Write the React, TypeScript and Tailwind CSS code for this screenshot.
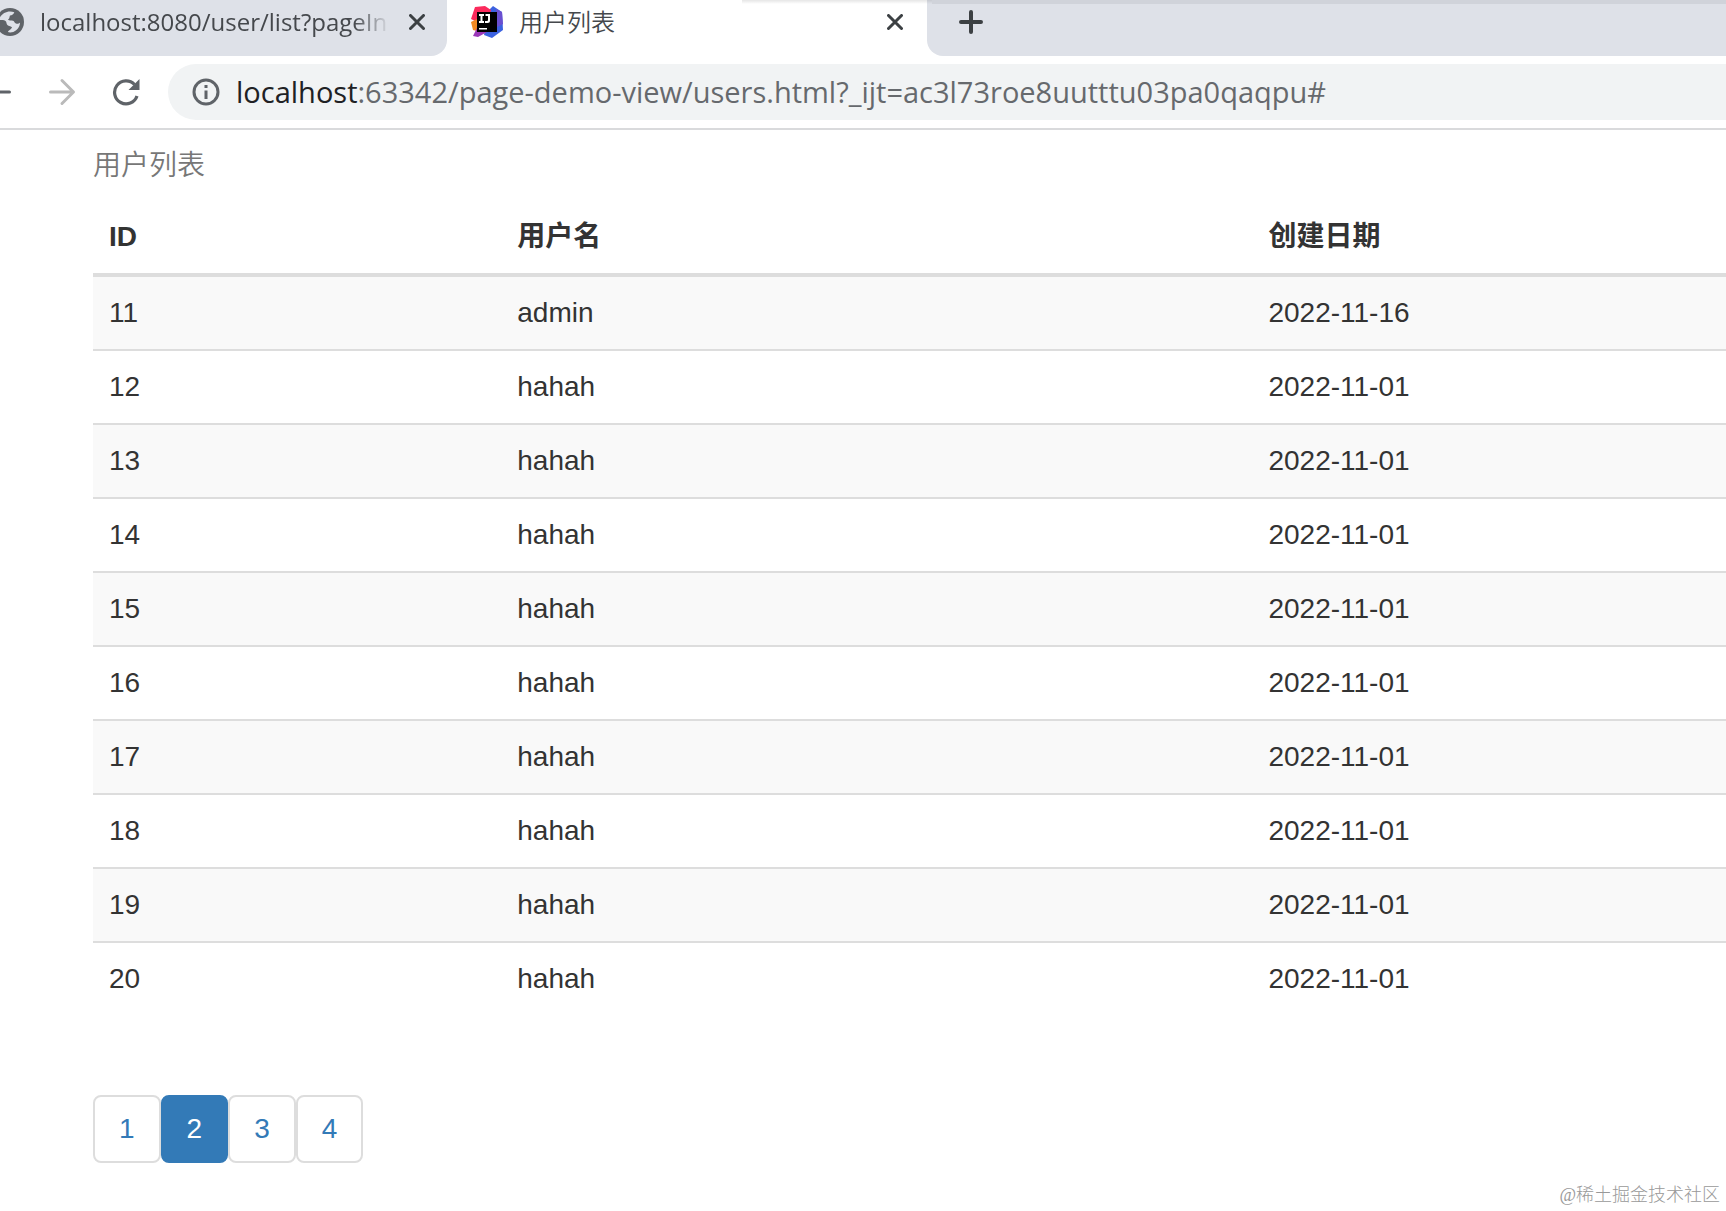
const users = [
  { id: 11, name: "admin", date: "2022-11-16" },
  { id: 12, name: "hahah", date: "2022-11-01" },
  { id: 13, name: "hahah", date: "2022-11-01" },
  { id: 14, name: "hahah", date: "2022-11-01" },
  { id: 15, name: "hahah", date: "2022-11-01" },
  { id: 16, name: "hahah", date: "2022-11-01" },
  { id: 17, name: "hahah", date: "2022-11-01" },
  { id: 18, name: "hahah", date: "2022-11-01" },
  { id: 19, name: "hahah", date: "2022-11-01" },
  { id: 20, name: "hahah", date: "2022-11-01" },
]

const pages = [1, 2, 3, 4]
const current = 2

const CloseIcon = () => (
  <svg className="w-4 h-4" viewBox="0 0 16 16" fill="none" stroke="currentColor" strokeWidth="3" strokeLinecap="round">
    <path d="M1.500 1.500l13 13M14.500 1.500l-13 13" />
  </svg>
)

const GlobeIcon = () => (
  <svg className="size-7 shrink-0" viewBox="0 0 28 28">
    <circle cx="14" cy="14" r="14" fill="#5f6368" />
    <path d="M3 12C4 7 9 3.500 14 3.500c1.500 0 3 .3 4.300.8-.5 2-2.300 3-4.300 3.200-.8 2-.3 3-2 4 1 1.300 3.500.8 5 1.200 1.600.5 1.400 2.300 3 2.900 1.500.6 3-.2 4-.8-.3 4.500-3 7.700-6.700 9.200-2 .6-4.300.6-5.300 0 .4-2.200 3.600-2.600 4-4.800-1.500-1.400-4-1-5-2.700-.7-1.200-.3-2.500-1.500-3.500-2-1.300-4.500-.8-6.500-1z" fill="#dee1e8" />
  </svg>
)

const IdeaLogo = () => (
  <svg className="w-8 h-8 shrink-0" viewBox="0 0 32 32">
    <path d="M17 5L22 0l9 6 1 18-11 8-8-3z" fill="#3b62e0" />
    <path d="M25 3l6 3 1 12-6 3z" fill="#6a4fd0" />
    <path d="M4 1l10-1 6 4-2 8-12 4-6-3z" fill="#fb2a5c" />
    <path d="M0 16l6-3v12l-4-1z" fill="#f28a22" />
    <path d="M6 22l10 4-9 5-5-1z" fill="#9a37b8" />
    <path d="M6 6h20v20H6z" fill="#000" />
    <path d="M8 8h5v2h-1.500v5H13v2H8v-2h1.500v-5H8zM14.500 8h4.500v6.500q0 2.500-2.500 2.500H14v-2h2q1 0 1-1v-4h-2.500zM8 22h8v1.500H8z" fill="#fff" />
  </svg>
)

const ArrowRight = () => (
  <svg className="size-7" viewBox="0 0 28 28" fill="none" stroke="currentColor" strokeWidth="3" strokeLinecap="round" strokeLinejoin="round">
    <path d="M2.500 14h22M14 2.500L25.500 14 14 25.500" />
  </svg>
)

const ReloadIcon = () => (
  <svg className="size-7" viewBox="0 0 28 28">
    <path d="M22.500 6.500A11.500 11.500 0 1 0 25 18" fill="none" stroke="currentColor" strokeWidth="3.200" />
    <path d="M27.500 1v11H16.500z" fill="currentColor" />
  </svg>
)

const InfoIcon = () => (
  <svg className="size-7 shrink-0 text-[#5f6368]" viewBox="0 0 28 28">
    <circle cx="14" cy="14" r="12" fill="none" stroke="currentColor" strokeWidth="3" />
    <path d="M12.500 7h3v3h-3zM12.500 12.500h3v8.500h-3z" fill="currentColor" />
  </svg>
)

const TabBar = () => {
  return (
    <div className="relative flex h-14 bg-white font-['Open_Sans','Noto_Sans_CJK_SC',sans-serif] text-[24px] text-[#45484c]">
      <div className="flex items-center w-[447px] shrink-0 pr-[22px] pb-3 bg-[#dee1e8] rounded-br-2xl overflow-hidden">
        <div className="-ml-1 shrink-0"><GlobeIcon /></div>
        <span className="ml-4 whitespace-nowrap [mask-image:linear-gradient(to_right,#000_314px,transparent_350px)]">localhost:8080/user/list?pageIn</span>
        <button aria-label="Close tab" className="ml-auto text-[#3c4043]"><CloseIcon /></button>
      </div>
      <div className="flex items-center w-[480px] shrink-0 pl-6 pr-6 pb-3">
        <IdeaLogo />
        <span className="ml-4 font-[350]">用户列表</span>
        <button aria-label="Close tab" className="ml-auto text-[#3c4043]"><CloseIcon /></button>
      </div>
      <div className="flex items-center grow pl-8 pb-3 bg-[#dee1e8] rounded-bl-2xl">
        <button aria-label="New tab" className="text-[#3c4043]">
          <svg className="w-6 h-6" viewBox="0 0 24 24" fill="none" stroke="currentColor" strokeWidth="4" strokeLinecap="round">
            <path d="M12 2v20M2 12h20" />
          </svg>
        </button>
      </div>
      <div className="absolute top-0 right-0 w-[46%] h-1 bg-black/6" />
      <div className="absolute top-0 right-[46%] w-[11%] h-1 bg-linear-to-b from-black/10 to-transparent" />
    </div>
  )
}

const Toolbar = () => {
  return (
    <div className="flex items-center h-[74px] py-2 bg-white border-b-2 border-[#d9dadc] overflow-hidden">
      <button aria-label="Back" className="shrink-0 -ml-4 rotate-180 text-[#5f6368]"><ArrowRight /></button>
      <button aria-label="Forward" className="shrink-0 ml-9 text-[#bababa]"><ArrowRight /></button>
      <button aria-label="Reload" className="shrink-0 ml-9 text-[#5f6368]"><ReloadIcon /></button>
      <div className="flex items-center grow h-14 ml-7 pl-6 bg-[#f1f3f4] rounded-l-full">
        <InfoIcon />
        <span className="ml-4 font-['Open_Sans',sans-serif] text-[29px] leading-10 text-[#66696d]"><span className="text-[#202124]">localhost</span>:63342/page-demo-view/users.html?_ijt=ac3l73roe8uutttu03pa0qaqpu#</span>
      </div>
    </div>
  )
}

const UserTable = () => {
  return (
    <table className="w-full table-fixed border-collapse text-left">
      <caption className="pt-4 pb-4 text-left font-[350] text-[#777]">用户列表</caption>
      <thead>
        <tr className="border-b-4 border-[#ddd]">
          <th className="w-1/4 px-4 pt-[15px] pb-4">ID</th>
          <th className="w-[46%] px-4 pt-[15px] pb-4">用户名</th>
          <th className="px-4 pt-[15px] pb-4">创建日期</th>
        </tr>
      </thead>
      <tbody>
        {users.map((user) => (
          <tr key={user.id} className="border-b-2 border-[#ddd] last:border-b-0 odd:bg-[#f9f9f9]">
            <td className="p-4">{user.id}</td>
            <td className="p-4">{user.name}</td>
            <td className="p-4">{user.date}</td>
          </tr>
        ))}
      </tbody>
    </table>
  )
}

const Pagination = () => {
  return (
    <nav className="flex mt-20">
      {pages.map((page) => (
        <a
          key={page}
          href="#"
          className={page === current
            ? "px-6 py-3 border-2 border-[#337ab7] rounded-lg bg-[#337ab7] text-white"
            : "px-6 py-3 border-2 border-[#ddd] rounded-lg bg-white text-[#337ab7]"}
        >
          {page}
        </a>
      ))}
    </nav>
  )
}

const App = () => {
  return (
    <div className="relative min-h-screen overflow-hidden bg-white">
      <TabBar />
      <Toolbar />
      <main className="pl-[93px] font-['Liberation_Sans','Noto_Sans_CJK_SC',sans-serif] text-[28px] leading-10 text-[#333]">
        <UserTable />
        <Pagination />
      </main>
      <footer className="absolute right-1.5 bottom-1 font-['Liberation_Serif','Noto_Sans_CJK_SC',serif] text-[18px] leading-6 font-light text-[#999]">@稀土掘金技术社区</footer>
    </div>
  )
}

export default App
